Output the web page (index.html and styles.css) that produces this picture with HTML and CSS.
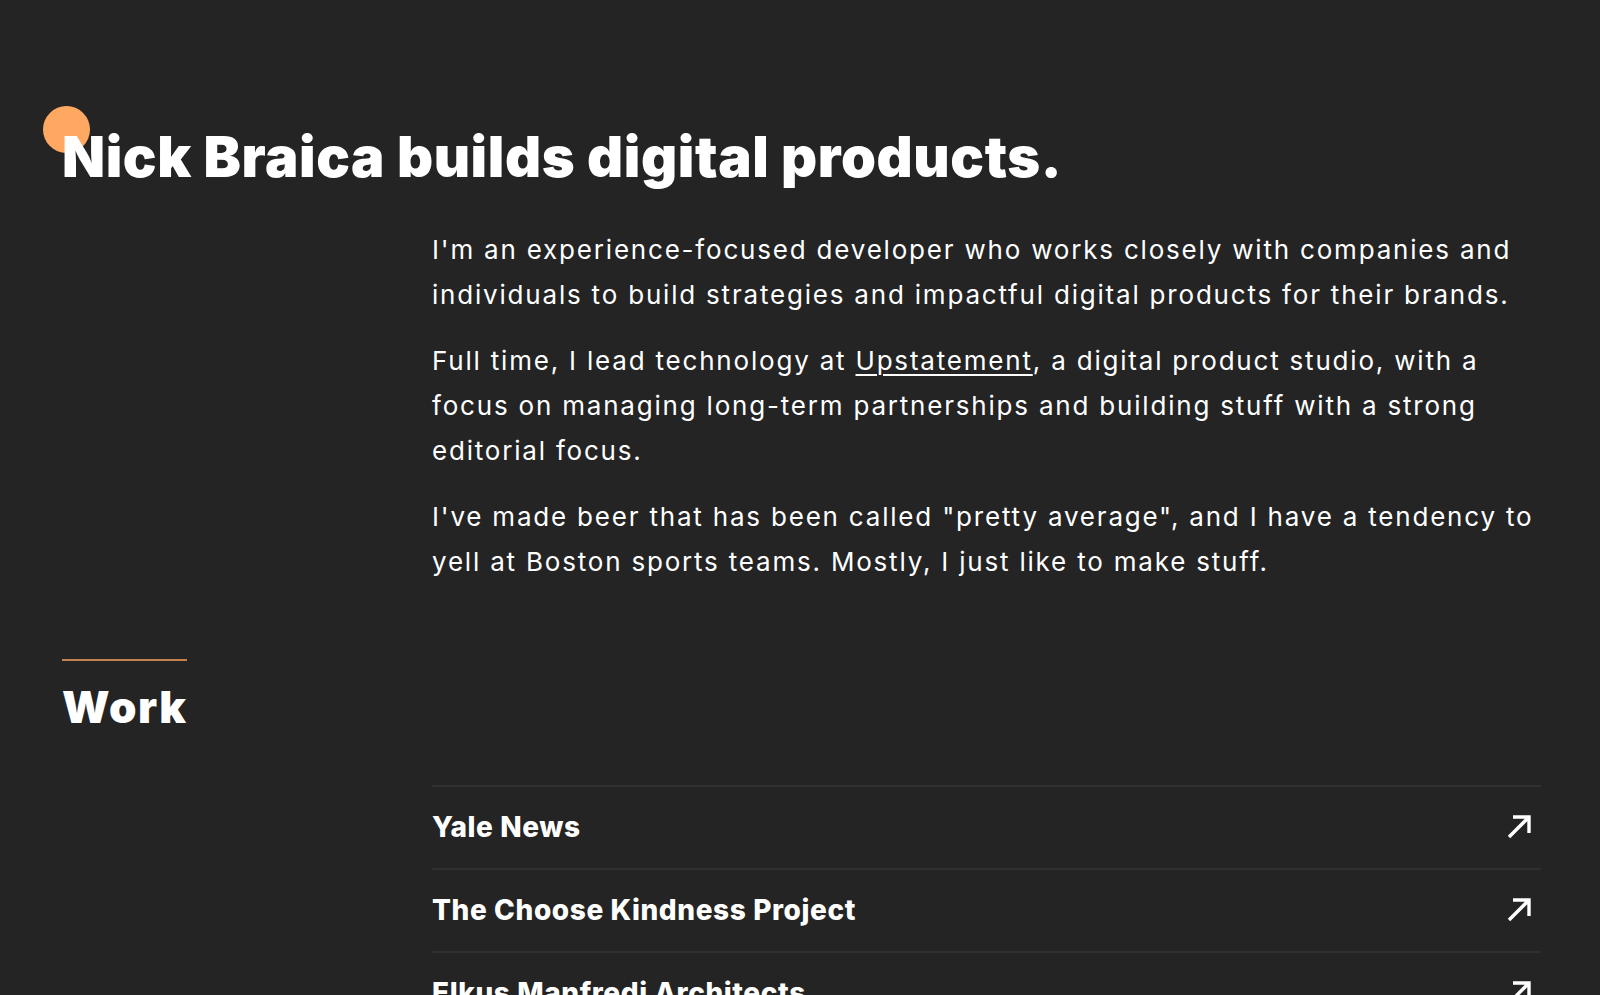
FILE: index.html
```html
<!DOCTYPE html>
<html lang="en">
<head>
<meta charset="utf-8">
<title>Nick Braica</title>
<link rel="stylesheet" href="styles.css">
</head>
<body>
<main class="page">
  <header class="intro">
    <span class="dot"></span>
    <h1 class="title">Nick Braica builds digital products.</h1>
  </header>
  <section class="about">
    <div class="about-text">
      <p>I'm an experience-focused developer who works closely with companies and individuals to build strategies and impactful digital products for their brands.</p>
      <p>Full time, I lead technology at <a href="#">Upstatement</a>, a digital product studio, with a focus on managing long-term partnerships and building stuff with a strong editorial focus.</p>
      <p>I've made beer that has been called "pretty average", and I have a tendency to yell at Boston sports teams. Mostly, I just like to make stuff.</p>
    </div>
  </section>
  <section class="work">
    <h2 class="section-title">Work</h2>
    <ul class="work-list">
      <li><a href="#" class="work-item"><span>Yale News</span><svg class="arrow" viewBox="0 0 24 24"><path d="M2 22 L22 2 M6 2 H22 V18"/></svg></a></li>
      <li><a href="#" class="work-item"><span>The Choose Kindness Project</span><svg class="arrow" viewBox="0 0 24 24"><path d="M2 22 L22 2 M6 2 H22 V18"/></svg></a></li>
      <li><a href="#" class="work-item"><span>Elkus Manfredi Architects</span><svg class="arrow" viewBox="0 0 24 24"><path d="M2 22 L22 2 M6 2 H22 V18"/></svg></a></li>
    </ul>
  </section>
</main>
</body>
</html>
```

FILE: styles.css
```css
* { box-sizing: border-box; }
html, body { margin: 0; padding: 0; }
body {
  background: #242424;
  color: #fff;
  font-family: "Inter", "Roboto", sans-serif;
  overflow: hidden;
  height: 995px;
}
.page {
  padding: 0 59px 0 62px;
}
.intro {
  position: relative;
  padding-top: 124px;
}
.dot {
  position: absolute;
  left: -19px;
  top: 106px;
  width: 47px;
  height: 47px;
  border-radius: 50%;
  background: #ffa862;
}
.title {
  position: relative;
  margin: 0;
  font-size: 56px;
  line-height: 1.2;
  font-weight: 900;
  letter-spacing: 0.6px;
}
.about {
  display: grid;
  grid-template-columns: 370px 1fr;
  margin-top: 37px;
}
.about-text { grid-column: 2; }
.about-text p {
  margin: 0 0 22px;
  font-size: 26px;
  line-height: 44.6px;
  font-weight: 400;
  letter-spacing: 1.8px;
  color: #fff;
}
.about-text a { color: inherit; text-decoration: underline; text-underline-offset: 4px; text-decoration-thickness: 2px; }
.work { margin-top: 53px; }
.section-title {
  display: inline-block;
  margin: 0;
  border-top: 2px solid #c4804d;
  padding-top: 22px;
  font-size: 44px;
  line-height: 1.1;
  font-weight: 900;
  letter-spacing: 1.5px;
}
.work-list {
  list-style: none;
  margin: 53px 0 0 370px;
  padding: 0;
}
.work-list li { border-top: 2px solid #303030; }
.work-item {
  display: flex;
  justify-content: space-between;
  align-items: center;
  height: 81px;
  color: #fff;
  text-decoration: none;
  font-size: 28px;
  font-weight: 800;
  letter-spacing: 0.6px;
  padding-right: 10px;
}
.arrow {
  width: 24px;
  height: 24px;
  fill: none;
  stroke: #fff;
  stroke-width: 3.4;
}
```
